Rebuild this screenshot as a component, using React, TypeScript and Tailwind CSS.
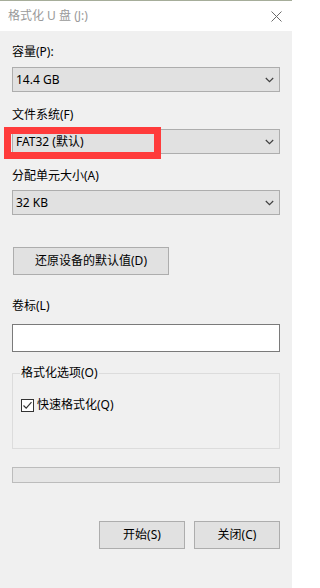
import React from "react";

const font = { fontFamily: '"Noto Sans", "Noto Sans CJK SC", sans-serif' };

function Chevron() {
  return (
    <svg width="9" height="6" viewBox="0 0 9 6" className="shrink-0">
      <path d="M0.8 1 L4.5 4.6 L8.2 1" fill="none" stroke="#404040" strokeWidth="1.2" />
    </svg>
  );
}

function Combo({ value }: { value: string }) {
  return (
    <div className="h-[25px] border border-[#adadad] bg-[#e1e1e1] flex items-center justify-between pl-[3px] pr-[5px] text-[12px] text-black leading-4">
      <span>{value}</span>
      <Chevron />
    </div>
  );
}

function Label({ children, className }: { children: React.ReactNode; className: string }) {
  return <div className={"h-4 leading-4 text-[12px] text-black " + className}>{children}</div>;
}

export default function App() {
  return (
    <div className="w-[292px] h-[588px] bg-[#f0f0f0] flex flex-col overflow-hidden relative" style={font}>
      <div className="h-px bg-[#a6ad9a]" />
      <div className="h-[30px] bg-white flex items-center justify-between pl-2 pr-[10px]">
        <span className="text-[12px] text-[#9a9a9a] leading-4">格式化 U 盘 (J:)</span>
        <svg width="11" height="11" viewBox="0 0 11 11">
          <path d="M0.5 0.5 L10.5 10.5 M10.5 0.5 L0.5 10.5" stroke="#6b6b6b" strokeWidth="1" fill="none" />
        </svg>
      </div>
      <div className="flex flex-col px-3">
        <Label className="mt-[13px]">容量(P):</Label>
        <div className="mt-[7px]">
          <Combo value="14.4 GB" />
        </div>
        <Label className="mt-[15px]">文件系统(F)</Label>
        <div className="mt-[6px]">
          <Combo value="FAT32 (默认)" />
        </div>
        <Label className="mt-[14px]">分配单元大小(A)</Label>
        <div className="mt-[6px]">
          <Combo value="32 KB" />
        </div>
        <div className="mt-[32px] ml-px w-[156px] h-[28px] border border-[#adadad] bg-[#e1e1e1] flex items-center justify-center text-[12px] text-black">
          还原设备的默认值(D)
        </div>
        <Label className="mt-[23px]">卷标(L)</Label>
        <div className="mt-[10px] h-[28px] border border-[#7a7a7a] bg-white" />
        <div className="mt-[21px] h-[76px] border border-[#dcdcdc] relative pl-2 pt-[23px]">
          <span className="absolute left-[7px] top-[-9px] px-px bg-[#f0f0f0] text-[12px] leading-4 text-black">格式化选项(O)</span>
          <div className="flex items-center gap-[3px]">
            <div className="w-[13px] h-[13px] border border-[#333333] bg-white flex items-center justify-center">
              <svg width="11" height="11" viewBox="0 0 11 11">
                <path d="M1.5 5.5 L4.2 8.2 L9.5 2.2" fill="none" stroke="#333333" strokeWidth="1.2" />
              </svg>
            </div>
            <span className="text-[12px] leading-4 text-black">快速格式化(Q)</span>
          </div>
        </div>
        <div className="mt-[18px] h-4 border border-[#bcbcbc] bg-[#e6e6e6]" />
        <div className="mt-[38px] flex justify-end gap-[9px]">
          <div className="w-[86px] h-[28px] border border-[#adadad] bg-[#e1e1e1] flex items-center justify-center text-[12px] text-black">
            开始(S)
          </div>
          <div className="w-[86px] h-[28px] border border-[#adadad] bg-[#e1e1e1] flex items-center justify-center text-[12px] text-black">
            关闭(C)
          </div>
        </div>
      </div>
      <div className="absolute left-[4px] top-[127px] w-[157px] h-[32px] border-[7px] border-[#ff3b3b] pointer-events-none" />
    </div>
  );
}
